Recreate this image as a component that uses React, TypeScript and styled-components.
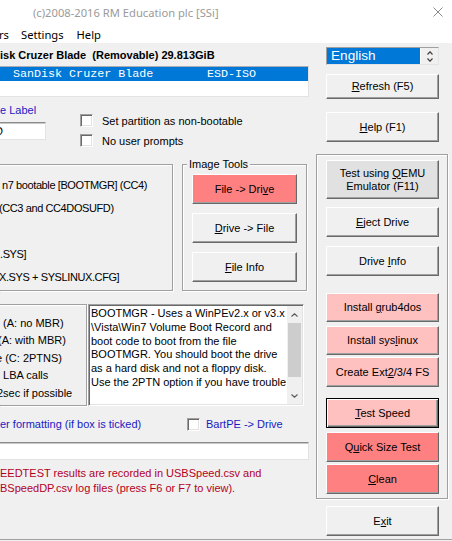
import React from 'react';
import styled, { createGlobalStyle } from 'styled-components';

const GlobalStyle = createGlobalStyle`
  html, body {
    margin: 0;
    padding: 0;
    background: #f0f0f0;
    overflow: hidden;
  }
  body {
    font-family: "Liberation Sans", Arial, sans-serif;
    font-size: 11px;
    color: #000;
  }
`;

const Window = styled.div`
  width: 452px;
  height: 541px;
  overflow: hidden;
  background: #f0f0f0;
  display: flex;
  flex-direction: column;
`;

const TitleBar = styled.div`
  height: 24px;
  flex-shrink: 0;
  background: #fff;
  display: flex;
  align-items: center;
  padding-left: 33px;
  font-family: "Noto Sans", "Open Sans", sans-serif;
  font-size: 11.2px;
  color: #9a9a9a;
`;

const CloseBox = styled.div`
  margin-left: auto;
  margin-right: 9px;
  width: 10px;
  height: 10px;
  display: flex;
`;

const MenuBar = styled.div`
  height: 19px;
  flex-shrink: 0;
  background: #fff;
  display: flex;
  align-items: center;
  padding-top: 2px;
  box-sizing: border-box;
  font-family: "Noto Sans", "Open Sans", sans-serif;
  font-size: 11.2px;
`;

const MenuItem = styled.span<{ $ml: number }>`
  margin-left: ${(p) => p.$ml}px;
  white-space: pre;
`;

const Body = styled.div`
  height: 496px;
  flex-shrink: 0;
  display: flex;
`;

const StatusBar = styled.div`
  flex: 1;
  border-top: 1px solid #a0a0a0;
`;

const LeftCol = styled.div`
  width: 316px;
  flex-shrink: 0;
  display: flex;
  flex-direction: column;
`;

const RightCol = styled.div`
  width: 136px;
  flex-shrink: 0;
  display: flex;
  flex-direction: column;
  padding-top: 4px;
`;

const DriveTitle = styled.div`
  margin-top: 5px;
  height: 14px;
  line-height: 14px;
  font-weight: bold;
  white-space: pre;
`;

const ListBox = styled.div`
  margin-top: 4px;
  width: 309px;
  height: 31px;
  box-sizing: border-box;
  background: #fff;
  border-top: 1px solid #abadb3;
  border-right: 1px solid #e3e3e3;
  border-bottom: 1px solid #e3e3e3;
  overflow: hidden;
`;

const ListRow = styled.div<{ $selected?: boolean }>`
  height: 14px;
  display: flex;
  align-items: center;
  background: ${(p) => (p.$selected ? '#0078d7' : 'transparent')};
  color: ${(p) => (p.$selected ? '#fff' : '#000')};
  font-family: "Liberation Mono", "Courier New", monospace;
  font-size: 11.7px;
  white-space: pre;
`;

const ListCell = styled.span<{ $w?: number; $pl?: number }>`
  width: ${(p) => (p.$w ? `${p.$w}px` : 'auto')};
  padding-left: ${(p) => p.$pl ?? 0}px;
  flex-shrink: 0;
`;

const OptionsRow = styled.div`
  display: flex;
  margin-top: 7px;
`;

const LabelBlock = styled.div`
  width: 46px;
  display: flex;
  flex-direction: column;
`;

const BlueText = styled.div`
  color: #1a1ac4;
  height: 13px;
  line-height: 13px;
  white-space: pre;
`;

const Field = styled.div<{ $w: number; $h: number; $mt: number }>`
  width: ${(p) => p.$w}px;
  height: ${(p) => p.$h}px;
  margin-top: ${(p) => p.$mt}px;
  box-sizing: border-box;
  background: #fff;
  border-top: 1px solid #8c8c8c;
  border-right: 1px solid #e3e3e3;
  border-bottom: 1px solid #e3e3e3;
  box-shadow: inset 0 1px 0 #c8c8c8;
  overflow: hidden;
  line-height: ${(p) => p.$h - 2}px;
  white-space: pre;
`;

const FieldText = styled.span`
  display: inline-block;
  margin-left: -5px;
`;

const CheckCol = styled.div`
  margin-left: 34px;
  padding-top: 10px;
  display: flex;
  flex-direction: column;
  gap: 7px;
`;

const CheckRow = styled.div`
  display: flex;
  align-items: center;
  height: 13px;
  gap: 9px;
  white-space: pre;
`;

const CheckBox = styled.span`
  width: 13px;
  height: 13px;
  box-sizing: border-box;
  flex-shrink: 0;
  background: #fff;
  border-top: 1px solid #a0a0a0;
  border-left: 1px solid #a0a0a0;
  border-right: 1px solid #fff;
  border-bottom: 1px solid #fff;
  box-shadow: inset 1px 1px 0 #696969, inset -1px -1px 0 #e3e3e3;
`;

const GroupsRow = styled.div`
  display: flex;
  margin-top: 17px;
`;

const GroupBox = styled.div<{ $w: number; $h: number; $ml?: number; $open?: boolean; $pt?: number }>`
  position: relative;
  width: ${(p) => p.$w}px;
  height: ${(p) => p.$h}px;
  margin-left: ${(p) => p.$ml ?? 0}px;
  padding-top: ${(p) => p.$pt ?? 0}px;
  box-sizing: border-box;
  flex-shrink: 0;
  border: 1px solid #a0a0a0;
  border-left: ${(p) => (p.$open ? 'none' : '1px solid #a0a0a0')};
  box-shadow: inset ${(p) => (p.$open ? 0 : 1)}px 1px 0 #fff, 1px 1px 0 #fff;
  display: flex;
  flex-direction: column;
`;

const Legend = styled.span`
  position: absolute;
  top: -8px;
  left: 4px;
  padding: 0 2px;
  background: #f0f0f0;
  line-height: 14px;
  white-space: pre;
`;

const OptionLine = styled.div<{ $h: number; $shift?: number; $tight?: boolean }>`
  height: ${(p) => p.$h}px;
  display: flex;
  align-items: center;
  white-space: pre;
  overflow: hidden;
  letter-spacing: ${(p) => (p.$tight ? '-0.4px' : 'normal')};
  & > span {
    margin-left: ${(p) => p.$shift ?? 0}px;
  }
`;

const ButtonStack = styled.div<{ $pt: number }>`
  display: flex;
  flex-direction: column;
  padding: ${(p) => p.$pt}px 0 0 9px;
`;

const Button = styled.div<{ $h: number; $w?: number; $mt?: number; $ml?: number; $bg?: string; $default?: boolean }>`
  box-sizing: border-box;
  width: ${(p) => p.$w ?? 113}px;
  height: ${(p) => p.$h}px;
  margin-top: ${(p) => p.$mt ?? 0}px;
  margin-left: ${(p) => p.$ml ?? 0}px;
  flex-shrink: 0;
  background: ${(p) => p.$bg ?? '#f0f0f0'};
  border: 1px solid;
  border-color: ${(p) => (p.$default ? '#000' : '#fff #696969 #696969 #fff')};
  box-shadow: ${(p) =>
    p.$default
      ? 'inset 1px 1px 0 #fff, inset -1px -1px 0 #696969, inset -2px -2px 0 #a0a0a0'
      : 'inset -1px -1px 0 #a0a0a0'};
  display: flex;
  align-items: center;
  justify-content: center;
  text-align: center;
  line-height: 13px;
  white-space: pre;

  u {
    text-decoration-thickness: 1px;
    text-underline-offset: 1px;
  }
`;

const BottomRow = styled.div`
  display: flex;
  margin-top: 13px;
`;

const InfoBox = styled.div`
  width: 216px;
  height: 102px;
  margin-left: 1px;
  box-sizing: border-box;
  background: #fff;
  border: 1px solid;
  border-color: #a0a0a0 #fff #fff #a0a0a0;
  box-shadow: inset 1px 1px 0 #696969, inset -1px -1px 0 #e3e3e3;
  display: flex;
`;

const InfoText = styled.div`
  flex: 1;
  padding: 2px 0 0 2px;
  line-height: 13.8px;
  white-space: pre;
  overflow: hidden;
`;

const ScrollBar = styled.div`
  width: 15px;
  margin: 1px 1px 1px 0;
  background: #f0f0f0;
  display: flex;
  flex-direction: column;
`;

const ScrollArrow = styled.div`
  height: 17px;
  display: flex;
  align-items: center;
  justify-content: center;
  flex-shrink: 0;
`;

const ScrollThumb = styled.div`
  height: 54px;
  margin: 0 1px;
  background: #cdcdcd;
`;

const ScrollTrack = styled.div`
  flex: 1;
`;

const FormatRow = styled.div`
  display: flex;
  align-items: center;
  height: 14px;
  margin-top: 11px;
  color: #1a1ac4;
  white-space: pre;
`;

const FormatText = styled.span`
  width: 187px;
  flex-shrink: 0;
`;

const CheckLabel = styled.span`
  margin-left: 6px;
`;

const RedNote = styled.div`
  margin-top: 6px;
  color: #b4001e;
  line-height: 15px;
  white-space: pre;
`;

const Combo = styled.div`
  width: 113px;
  height: 18px;
  margin-left: 10px;
  box-sizing: border-box;
  background: #fff;
  border: 1px solid;
  border-color: #a0a0a0 #e3e3e3 #e3e3e3 #a0a0a0;
  display: flex;
`;

const ComboValue = styled.div`
  width: 93px;
  background: #0078d7;
  color: #fff;
  font-size: 13.6px;
  line-height: 16px;
  padding-left: 4px;
  box-sizing: border-box;
`;

const Spin = styled.div`
  flex: 1;
  display: flex;
  flex-direction: column;
  align-items: center;
  justify-content: center;
  gap: 3px;
  background: #f0f0f0;
  margin-left: 1px;
`;

const RightGroup = styled.div`
  width: 132px;
  height: 345px;
  margin-top: 12px;
  box-sizing: border-box;
  border: 1px solid #a0a0a0;
  box-shadow: inset 1px 1px 0 #fff, 1px 1px 0 #fff;
  display: flex;
  flex-direction: column;
  padding-left: 9px;
`;

const Chevron = ({ up, color = '#5a5a5a', w = 7, h = 4 }: { up?: boolean; color?: string; w?: number; h?: number }) => (
  <svg width={w} height={h} viewBox={`0 0 ${w} ${h}`}>
    <polyline
      points={up ? `0.5,${h - 0.5} ${w / 2},0.8 ${w - 0.5},${h - 0.5}` : `0.5,0.5 ${w / 2},${h - 0.8} ${w - 0.5},0.5`}
      fill="none"
      stroke={color}
      strokeWidth="1.2"
    />
  </svg>
);

const bootOptions: { text: string; shift: number }[] = [
  { text: 'n7 bootable [BOOTMGR] (CC4)', shift: 2 },
  { text: '(CC3 and CC4DOSUFD)', shift: -1 },
  { text: '', shift: 0 },
  { text: '.SYS]', shift: 0 },
  { text: 'X.SYS + SYSLINUX.CFG]', shift: -1 },
];

const diskOptions: { text: string; shift: number }[] = [
  { text: ' (A: no MBR)', shift: 0 },
  { text: '(A: with MBR)', shift: -2 },
  { text: 'e (C: 2PTNS)', shift: -4 },
  { text: ' LBA calls', shift: 0 },
  { text: '2sec if possible', shift: -3 },
];

const infoLines = [
  'BOOTMGR - Uses a WinPEv2.x or v3.x',
  '\\Vista\\Win7 Volume Boot Record and',
  'boot code to boot from the file',
  'BOOTMGR. You should boot the drive',
  'as a hard disk and not a floppy disk.',
  'Use the 2PTN option if you have trouble',
];

const App = () => {
  return (
    <>
      <GlobalStyle />
      <Window>
        <TitleBar>
          (c)2008-2016 RM Education plc [SSi]
          <CloseBox>
            <svg width="10" height="10" viewBox="0 0 10 10">
              <path d="M0.5 0.5 L9.5 9.5 M9.5 0.5 L0.5 9.5" stroke="#8a8a8a" strokeWidth="1" fill="none" />
            </svg>
          </CloseBox>
        </TitleBar>
        <MenuBar>
          <MenuItem $ml={-1}>rs</MenuItem>
          <MenuItem $ml={12}>Settings</MenuItem>
          <MenuItem $ml={13}>Help</MenuItem>
        </MenuBar>
        <Body>
          <LeftCol>
            <DriveTitle>isk Cruzer Blade  (Removable) 29.813GiB</DriveTitle>
            <ListBox>
              <ListRow $selected>
                <ListCell $pl={13} $w={194}>SanDisk Cruzer Blade</ListCell>
                <ListCell>ESD-ISO</ListCell>
              </ListRow>
            </ListBox>
            <OptionsRow>
              <LabelBlock>
                <BlueText>e Label</BlueText>
                <Field $w={46} $h={18} $mt={5}>
                  <FieldText>D</FieldText>
                </Field>
              </LabelBlock>
              <CheckCol>
                <CheckRow>
                  <CheckBox />
                  Set partition as non-bootable
                </CheckRow>
                <CheckRow>
                  <CheckBox />
                  No user prompts
                </CheckRow>
              </CheckCol>
            </OptionsRow>
            <GroupsRow>
              <GroupBox $w={173} $h={127} $pt={8} $open>
                {bootOptions.map((o, i) => (
                  <OptionLine key={i} $h={23} $shift={o.shift} $tight>
                    <span>{o.text}</span>
                  </OptionLine>
                ))}
              </GroupBox>
              <GroupBox $w={125} $h={127} $ml={9}>
                <Legend>Image Tools</Legend>
                <ButtonStack $pt={9}>
                  <Button $w={105} $h={30} $bg="#ff8080">
                    <span>
                      File -&gt; Dri<u>v</u>e
                    </span>
                  </Button>
                  <Button $w={105} $h={30} $mt={9}>
                    <span>
                      <u>D</u>rive -&gt; File
                    </span>
                  </Button>
                  <Button $w={105} $h={30} $mt={9}>
                    <span>
                      <u>F</u>ile Info
                    </span>
                  </Button>
                </ButtonStack>
              </GroupBox>
            </GroupsRow>
            <BottomRow>
              <GroupBox $w={87} $h={102} $pt={9} $open>
                {diskOptions.map((o, i) => (
                  <OptionLine key={i} $h={17.5} $shift={o.shift}>
                    <span>{o.text}</span>
                  </OptionLine>
                ))}
              </GroupBox>
              <InfoBox>
                <InfoText>
                  {infoLines.map((l, i) => (
                    <div key={i}>{l}</div>
                  ))}
                </InfoText>
                <ScrollBar>
                  <ScrollArrow>
                    <Chevron up />
                  </ScrollArrow>
                  <ScrollThumb />
                  <ScrollTrack />
                  <ScrollArrow>
                    <Chevron />
                  </ScrollArrow>
                </ScrollBar>
              </InfoBox>
            </BottomRow>
            <FormatRow>
              <FormatText>er formatting (if box is ticked)</FormatText>
              <CheckBox />
              <CheckLabel>BartPE -&gt; Drive</CheckLabel>
            </FormatRow>
            <Field $w={309} $h={18} $mt={11} />
            <RedNote>
              EEDTEST results are recorded in USBSpeed.csv and
              <br />
              BSpeedDP.csv log files (press F6 or F7 to view).
            </RedNote>
          </LeftCol>
          <RightCol>
            <Combo>
              <ComboValue>English</ComboValue>
              <Spin>
                <Chevron up color="#404040" w={6} h={4} />
                <Chevron color="#404040" w={6} h={4} />
              </Spin>
            </Combo>
            <Button $h={25} $mt={9} $ml={10}>
              <span>
                <u>R</u>efresh (F5)
              </span>
            </Button>
            <Button $h={30} $mt={13} $ml={10}>
              <span>
                <u>H</u>elp (F1)
              </span>
            </Button>
            <RightGroup>
              <Button $h={39} $mt={5} $bg="#e1e1e1">
                <span>
                  Test using <u>Q</u>EMU
                  <br />
                  Emulator (F11)
                </span>
              </Button>
              <Button $h={30} $mt={8}>
                <span>
                  <u>E</u>ject Drive
                </span>
              </Button>
              <Button $h={30} $mt={9}>
                <span>
                  Drive <u>I</u>nfo
                </span>
              </Button>
              <Button $h={29} $mt={17} $bg="#ffc0c0">
                <span>
                  Install <u>g</u>rub4dos
                </span>
              </Button>
              <Button $h={29} $mt={4} $bg="#ffc0c0">
                <span>
                  Install sys<u>l</u>inux
                </span>
              </Button>
              <Button $h={30} $mt={2} $bg="#ffc0c0">
                <span>
                  Create Ext<u>2</u>/3/4 FS
                </span>
              </Button>
              <Button $h={30} $mt={11} $bg="#ffc0c0" $default>
                <span>
                  <u>T</u>est Speed
                </span>
              </Button>
              <Button $h={30} $mt={4} $bg="#ff8080">
                <span>
                  Q<u>u</u>ick Size Test
                </span>
              </Button>
              <Button $h={30} $mt={2} $bg="#ff8080">
                <span>
                  <u>C</u>lean
                </span>
              </Button>
            </RightGroup>
            <Button $h={30} $mt={7} $ml={10}>
              <span>
                E<u>x</u>it
              </span>
            </Button>
          </RightCol>
        </Body>
        <StatusBar />
      </Window>
    </>
  );
};

export default App;
